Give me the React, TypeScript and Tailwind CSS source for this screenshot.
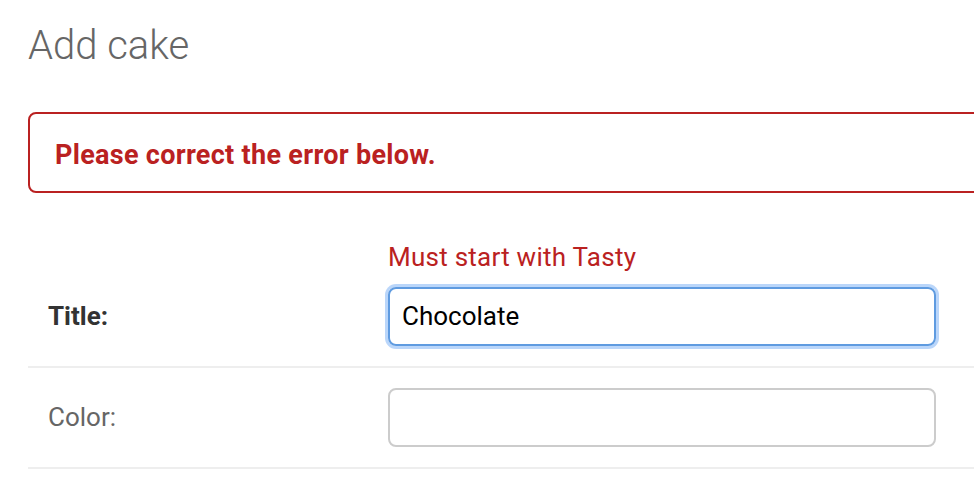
export default function App() {
  return (
    <div className="h-[498px] w-full overflow-hidden bg-white font-['Roboto',sans-serif]">
      <div className="w-[1000px] pl-[28px]">
        <h1 className="mt-[22px] text-[40px] font-light leading-[48px] text-[#666]">Add cake</h1>
        <p className="mt-[42px] rounded-lg border-2 border-[#ba2121] pb-[20px] pl-[25px] pt-[25px] text-[27px] font-bold leading-[32px] tracking-[0.3px] text-[#ba2121]">
          Please correct the error below.
        </p>
        <fieldset>
          <div className="flex border-b-2 border-[#eeeeee] pb-[20px] pt-[48px]">
            <div className="flex h-[59px] w-[360px] items-center self-end pl-[20px] text-[26px] font-bold text-[#333]">Title:</div>
            <div className="flex flex-col">
              <ul className="text-[26px] leading-[32px] tracking-[0.25px] text-[#ba2121]">
                <li>Must start with Tasty</li>
              </ul>
              <div className="mt-[14px] flex h-[59px] w-[548px] items-center rounded-lg border-2 border-[#5f9be0] px-[12px] text-[26px] text-black shadow-[0_0_0_3px_rgba(130,180,245,0.55)]">
                Chocolate
              </div>
            </div>
          </div>
          <div className="flex border-b-2 border-[#eeeeee] py-[20px]">
            <div className="flex h-[59px] w-[360px] items-center pl-[20px] text-[26px] text-[#666]">Color:</div>
            <div className="h-[59px] w-[548px] rounded-lg border-2 border-[#cccccc] bg-white"></div>
          </div>
        </fieldset>
      </div>
    </div>
  );
}
